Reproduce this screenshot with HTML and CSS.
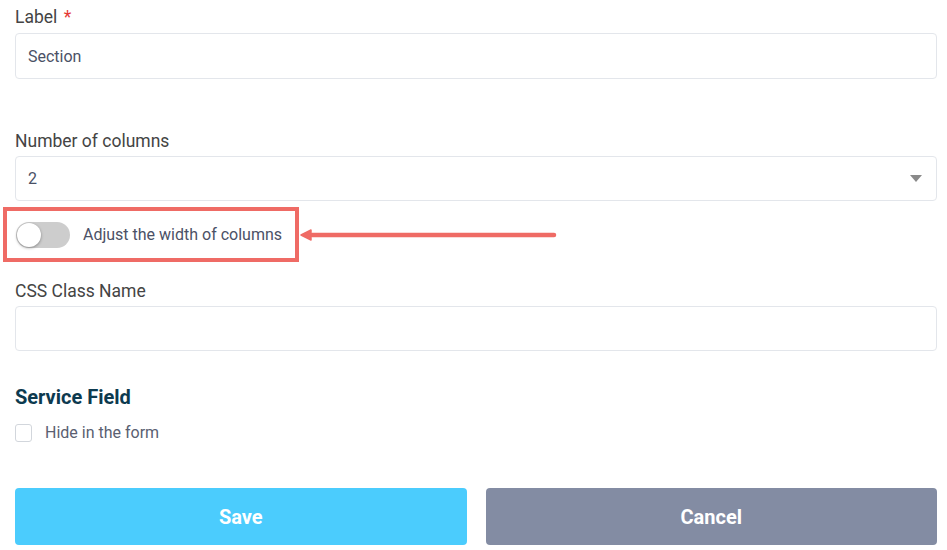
FILE: index.html
```html
<!DOCTYPE html>
<html lang="en">
<head>
<meta charset="utf-8">
<title>Section settings</title>
<link rel="stylesheet" href="styles.css">
</head>
<body>
<form class="panel">
  <div class="group">
    <label class="label">Label <span class="req">*</span></label>
    <div class="input">Section</div>
  </div>

  <div class="group group-cols">
    <label class="label">Number of columns</label>
    <div class="input select">
      <span>2</span>
      <svg class="caret" width="12" height="7" viewBox="0 0 12 7"><path d="M0 0h12L6 7z" fill="#8a8a8a"/></svg>
    </div>
  </div>

  <!-- annotated switch row -->
  <div class="switch-row">
    <div class="highlight">
      <span class="toggle"><span class="knob"></span></span>
      <span class="switch-text">Adjust the width of columns</span>
    </div>
    <svg class="pointer" width="258" height="14" viewBox="0 0 258 14">
      <path d="M12 7H254" stroke="#ef6b65" stroke-width="4.5" stroke-linecap="round"/>
      <path d="M1 7L11 2V12z" fill="#ef6b65" stroke="#ef6b65" stroke-width="1.5" stroke-linejoin="round"/>
    </svg>
  </div>

  <div class="group group-css">
    <label class="label">CSS Class Name</label>
    <div class="input"></div>
  </div>

  <h3 class="section-title">Service Field</h3>
  <div class="check-row">
    <span class="checkbox"></span>
    <span class="check-text">Hide in the form</span>
  </div>

  <div class="actions">
    <button type="button" class="btn btn-save">Save</button>
    <button type="button" class="btn btn-cancel">Cancel</button>
  </div>
</form>
</body>
</html>
```

FILE: styles.css
```css
body {
  margin: 0;
  background: #fff;
  font-family: Roboto, "Liberation Sans", Arial, sans-serif;
}

.panel {
  padding: 7px 10px 0 15px;
}

/* form fields */
.group {
  display: flex;
  flex-direction: column;
}
.group-cols {
  margin-top: 52px;
}
.group-css {
  margin-top: 19px;
}
.label {
  font-size: 17.5px;
  line-height: 20px;
  color: #444;
  margin-bottom: 6px;
}
.group-cols .label,
.group-css .label {
  margin-bottom: 5px;
}
.req {
  color: #e53935;
  margin-left: 2px;
}
.input {
  box-sizing: border-box;
  height: 46px;
  border: 1px solid #e3e6eb;
  border-radius: 4px;
  padding: 0 12px;
  font-size: 16px;
  color: #4b5166;
  display: flex;
  align-items: center;
}
.group-cols .input,
.group-css .input {
  height: 45px;
}
.select {
  justify-content: space-between;
  padding-right: 14px;
}
.caret {
  display: block;
}

/* switch with annotation */
.switch-row {
  display: flex;
  align-items: center;
  margin: 6px 0 0 -12px;
}
.highlight {
  box-sizing: border-box;
  width: 296px;
  height: 55px;
  border: 4px solid #ef6b65;
  padding: 0 0 0 9px;
  display: flex;
  align-items: center;
}
.toggle {
  width: 54px;
  height: 26px;
  border-radius: 13px;
  background: #cdcdcd;
  display: flex;
  align-items: center;
}
.knob {
  width: 24px;
  height: 24px;
  border-radius: 50%;
  background: #fff;
  margin-left: 1px;
  box-shadow: 0 1px 3px rgba(0, 0, 0, 0.35);
}
.switch-text {
  margin-left: 13px;
  font-size: 16px;
  color: #4b5166;
}
.pointer {
  display: block;
  margin-left: 1px;
}

/* service field */
.section-title {
  margin: 34px 0 0;
  font-size: 20px;
  line-height: 24px;
  font-weight: 700;
  color: #0d3a4f;
}
.check-row {
  display: flex;
  align-items: center;
  margin-top: 14px;
}
.checkbox {
  box-sizing: border-box;
  width: 17px;
  height: 18px;
  border: 1px solid #d2d6dc;
  border-radius: 3px;
}
.check-text {
  margin-left: 13px;
  font-size: 16px;
  color: #5a6071;
}

/* buttons */
.actions {
  display: flex;
  gap: 19px;
  margin-top: 46px;
}
.btn {
  flex: 1;
  height: 57px;
  border: 0;
  border-radius: 4px;
  color: #fff;
  font-family: Roboto, "Liberation Sans", Arial, sans-serif;
  font-size: 20px;
  font-weight: 700;
}
.btn-save {
  background: #4bccfd;
}
.btn-cancel {
  background: #838ca3;
}
```
